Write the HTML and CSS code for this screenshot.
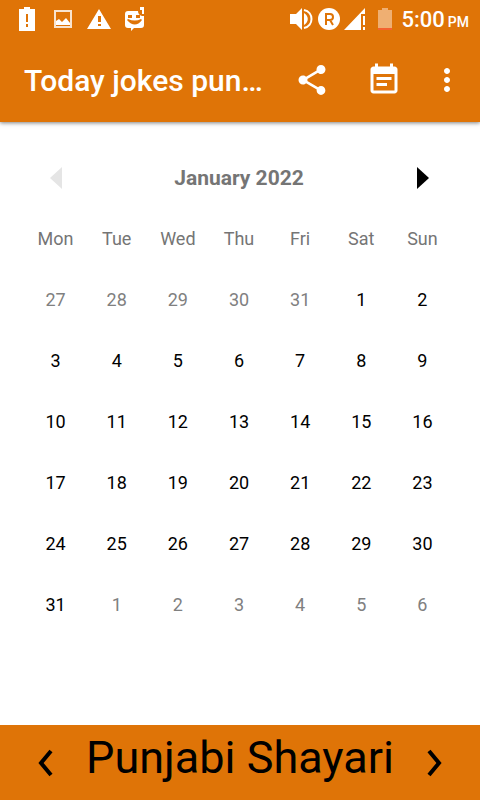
FILE: index.html
```html
<!DOCTYPE html>
<html lang="en">
<head>
    <meta charset="UTF-8">
    <meta name="viewport" content="width=device-width, initial-scale=1.0">
    <title>Today jokes</title>
    <link rel="stylesheet" href="styles.css">
</head>
<body>
    <header class="top">
        <div class="status-bar">
            <div class="notifications">
                <svg width="24" height="24" viewBox="0 0 24 24" fill="#fff">
                    <path fill-rule="evenodd" d="M9 0h6v2h5v22H4V2h5zM11 7v8h2V7zM11 17v3h2v-3z"/>
                </svg>
                <svg width="24" height="24" viewBox="0 0 24 24" fill="#fff">
                    <path d="M4 4h16v16H4z" fill="none" stroke="#fff" stroke-opacity="0.8" stroke-width="2"/>
                    <path d="M5 18v-4l3-2 3 3 4-4 4 5v2z"/>
                </svg>
                <svg width="24" height="24" viewBox="0 0 24 24" fill="#fff">
                    <path fill-rule="evenodd" d="M12 2l12 20H0zM11 9v6h3V9zM11 17v2h3v-2z"/>
                </svg>
                <svg width="24" height="24" viewBox="0 0 24 24" fill="#fff">
                    <path fill-rule="evenodd" d="M5 4h10q0 4 4 5h2v9q0 3-3 3h-7l-3 3v-3H5q-3 0-3-3V7q0-3 3-3zM5 8v3h4V8zM13 8v3h4V8zM4 13q8 9 15 0l-1-1q-6 3-13 0z"/>
                    <path d="M17 0h4v7h-2V3h-2z"/>
                </svg>
            </div>
            <div class="system">
                <svg width="24" height="24" viewBox="0 0 24 24" fill="#fff">
                    <path d="M0 7h6l6-6v22l-6-6H0z"/>
                    <path d="M14 6c5 3 5 9 0 12z"/>
                    <path d="M14 3c10 2 10 16 0 18" fill="none" stroke="#fff" stroke-width="2"/>
                </svg>
                <svg width="22" height="22" viewBox="0 0 22 22">
                    <circle cx="11" cy="11" r="11" fill="#fff"/>
                    <path d="M8 17V6h4q3 0 3 3t-3 3H8M12 12l3 5" fill="none" stroke="#df7407" stroke-width="2"/>
                </svg>
                <svg width="22" height="22" viewBox="0 0 22 22" fill="#fff">
                    <path d="M0 22L21 0v6h-4v16z"/>
                    <path d="M19 8h2v9h-2zM19 19h2v3h-2z"/>
                </svg>
                <svg class="battery" width="14" height="22" viewBox="0 0 14 22">
                    <path d="M4 0h6v2h4v18H0V2h4z" fill="#efaf72"/>
                    <path d="M0 20h14v2H0z" fill="#f4622f"/>
                </svg>
                <span class="clock">5:00 <small>PM</small></span>
            </div>
        </div>
        <div class="toolbar">
            <h1>Today jokes pun…</h1>
            <button class="tool" aria-label="Share">
                <svg width="36" height="36" viewBox="0 0 24 24" fill="#fff">
                    <path d="M18 16.080c-.76 0-1.440.3-1.960.77L8.910 12.700c.05-.23.09-.46.09-.7s-.04-.47-.09-.7l7.050-4.110c.54.5 1.250.81 2.040.81 1.660 0 3-1.340 3-3s-1.340-3-3-3-3 1.340-3 3c0 .24.04.47.09.7L8.040 9.810C7.500 9.310 6.790 9 6 9c-1.660 0-3 1.340-3 3s1.340 3 3 3c.79 0 1.500-.31 2.040-.81l7.120 4.160c-.05.21-.08.43-.08.65 0 1.610 1.310 2.920 2.920 2.920s2.920-1.310 2.920-2.920-1.310-2.920-2.920-2.920z"/>
                </svg>
            </button>
            <button class="tool" aria-label="Calendar">
                <svg width="36" height="36" viewBox="0 0 24 24" fill="#fff">
                    <path d="M17 10H7v2h10v-2zm2-7h-1V1h-2v2H8V1H6v2H5c-1.110 0-1.990.9-1.990 2L3 19c0 1.100.89 2 2 2h14c1.100 0 2-.9 2-2V5c0-1.100-.9-2-2-2zm0 16H5V8h14v11zm-5-5H7v2h7v-2z"/>
                </svg>
            </button>
            <button class="tool more" aria-label="More options">
                <svg width="36" height="36" viewBox="0 0 24 24" fill="#fff">
                    <path d="M12 8c1.100 0 2-.9 2-2s-.9-2-2-2-2 .9-2 2 .9 2 2 2zm0 2c-1.100 0-2 .9-2 2s.9 2 2 2 2-.9 2-2-.9-2-2-2zm0 6c-1.100 0-2 .9-2 2s.9 2 2 2 2-.9 2-2-.9-2-2-2z"/>
                </svg>
            </button>
        </div>
    </header>

    <main class="calendar">
        <div class="month-bar">
            <button class="month-btn" aria-label="Previous month" disabled>
                <svg width="12" height="22" viewBox="0 0 12 22"><path d="M12 0v22L0 11z" fill="#e5e5e5"/></svg>
            </button>
            <h2>January 2022</h2>
            <button class="month-btn" aria-label="Next month">
                <svg width="12" height="22" viewBox="0 0 12 22"><path d="M0 0l12 11L0 22z"/></svg>
            </button>
        </div>
        <table class="days">
            <thead>
                <tr><th>Mon</th><th>Tue</th><th>Wed</th><th>Thu</th><th>Fri</th><th>Sat</th><th>Sun</th></tr>
            </thead>
            <tbody>
                <!-- weeks are filled by the script -->
            </tbody>
        </table>
    </main>

    <footer class="pager">
        <button class="pager-btn" aria-label="Previous">
            <svg width="16" height="30" viewBox="0 0 16 30"><path d="M13 3L3 15l10 12" fill="none" stroke="#000" stroke-width="4"/></svg>
        </button>
        <p>Punjabi Shayari</p>
        <button class="pager-btn" aria-label="Next">
            <svg width="16" height="30" viewBox="0 0 16 30"><path d="M3 3l10 12L3 27" fill="none" stroke="#000" stroke-width="4"/></svg>
        </button>
    </footer>

    <script>
        const daysBody = document.querySelector(".days tbody");
        const year = 2022;
        const month = 0;

        function showMonth() {
            // weeks start on Monday
            const offset = (new Date(year, month, 1).getDay() + 6) % 7;

            for (let week = 0; week < 6; week++) {
                const row = document.createElement("tr");
                for (let i = 0; i < 7; i++) {
                    const date = new Date(year, month, 1 - offset + week * 7 + i);
                    const disabled = date.getMonth() !== month ? "disabled" : "";
                    row.innerHTML += `<td><button class="day" ${disabled}>${date.getDate()}</button></td>`;
                }
                daysBody.appendChild(row);
            }
        }

        showMonth();
    </script>
</body>
</html>
```
FILE: styles.css
```css
* {
    box-sizing: border-box;
}

body {
    margin: 0;
    min-height: 100vh;
    display: flex;
    flex-direction: column;
    background-color: #fff;
    font-family: Roboto, "Liberation Sans", sans-serif;
}

button {
    padding: 0;
    border: none;
    background: none;
    font-family: inherit;
    color: inherit;
}

svg {
    display: block;
}

.top {
    background-color: #df7407;
    color: #fff;
    box-shadow: 0 1px 4px rgba(0, 0, 0, 0.5);
}

.status-bar {
    height: 38px;
    padding: 0 11px 0 15px;
    display: flex;
    justify-content: space-between;
    align-items: center;
}

.notifications {
    display: flex;
    align-items: center;
    gap: 12px;
}

.system {
    display: flex;
    align-items: center;
    gap: 4px;
}

.system .battery {
    margin: 0 6px 0 8px;
}

.clock {
    display: flex;
    align-items: baseline;
    gap: 3px;
    padding-top: 3px;
    font-size: 22px;
    font-weight: 500;
    line-height: 24px;
}

.clock small {
    font-size: 14px;
}

.toolbar {
    height: 84px;
    padding-left: 24px;
    display: flex;
    align-items: center;
}

.toolbar h1 {
    flex: 1;
    margin: 0;
    font-size: 30px;
    font-weight: 500;
    white-space: nowrap;
}

.tool {
    width: 72px;
    height: 72px;
    display: grid;
    place-items: center;
}

.tool.more {
    width: 60px;
    padding-right: 6px;
}

.calendar {
    flex: 1;
    padding: 25px 27px 25px 25px;
}

.month-bar {
    height: 61px;
    display: flex;
    align-items: center;
}

.month-bar h2 {
    flex: 1;
    margin: 0;
    font-size: 21px;
    text-align: center;
    color: #757575;
}

.month-btn {
    width: 61px;
    height: 61px;
    display: grid;
    place-items: center;
}

.days {
    width: 100%;
    table-layout: fixed;
    border-collapse: collapse;
    font-size: 18px;
}

.days th,
.days td {
    height: 61px;
    padding: 0;
    text-align: center;
}

.days th {
    font-weight: 400;
    color: #757575;
}

.day {
    width: 100%;
    height: 61px;
    font-size: 18px;
    color: #000;
}

.day:disabled {
    color: #808080;
}

.pager {
    height: 75px;
    padding: 0 38px;
    display: flex;
    justify-content: space-between;
    align-items: center;
    background-color: #df7407;
}

.pager p {
    margin: 0;
    padding-bottom: 10px;
    font-size: 45px;
    line-height: 54px;
}
```
